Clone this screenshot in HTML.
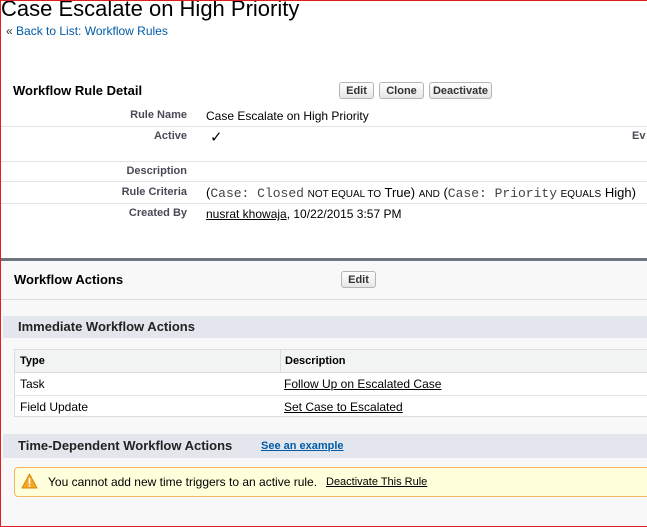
<!DOCTYPE html>
<html><head><style>
body{margin:0;width:647px;height:527px;overflow:hidden;font-family:"Liberation Sans",Arial,sans-serif;background:#fff;position:relative}
.frame{position:absolute;left:0;top:0;width:647px;height:527px;box-sizing:border-box;border:1px solid #e02020;border-right:none;pointer-events:none;z-index:9}
.a{position:absolute;white-space:nowrap}
.btn{position:absolute;height:17px;border:1px solid #b5b5b5;border-radius:3px;background:linear-gradient(#fff,#e6e6e6);font-size:11px;font-weight:bold;color:#333;text-align:center;line-height:17px;box-sizing:border-box}
.lbl{position:absolute;right:460px;font-size:11px;font-weight:bold;color:#4a4a56;white-space:nowrap}
.val{position:absolute;left:206px;font-size:12px;color:#000;white-space:nowrap}
.hl{position:absolute;left:1px;right:0;height:1px;background:#e3e3e3}
.mono{font-family:"Liberation Mono",monospace;font-size:13px;color:#444}
.sm{font-size:10px}
</style></head><body>
<div class="frame"></div>
<div class="a" style="left:1px;top:-4px;font-size:22px;color:#000">Case Escalate on High Priority</div>
<div class="a" style="left:6px;top:24px;font-size:12px;color:#015ba7"><span style="color:#333">«</span> Back to List: Workflow Rules</div>

<div class="a" style="left:13px;top:83px;font-size:13px;font-weight:bold;color:#000">Workflow Rule Detail</div>
<div class="btn" style="left:339px;top:82px;width:35px">Edit</div>
<div class="btn" style="left:379px;top:82px;width:45px">Clone</div>
<div class="btn" style="left:429px;top:82px;width:63px">Deactivate</div>

<div class="lbl" style="top:109px">Rule Name</div>
<div class="val" style="top:109px">Case Escalate on High Priority</div>
<div class="hl" style="top:126px"></div>
<div class="lbl" style="top:130px">Active</div>
<div class="val" style="left:210px;top:128px;font-size:15px">✓</div>
<div class="a" style="left:632px;top:130px;font-size:11px;font-weight:bold;color:#4a4a56">Ev</div>
<div class="hl" style="top:161px"></div>
<div class="lbl" style="top:165px">Description</div>
<div class="hl" style="top:181px"></div>
<div class="lbl" style="top:186px">Rule Criteria</div>
<div class="val" style="top:185px;font-size:13px">(<span class="mono">Case: Closed</span> <span class="sm">NOT EQUAL TO</span> True) <span class="sm">AND</span> (<span class="mono">Case: Priority</span> <span class="sm">EQUALS</span> High)</div>
<div class="hl" style="top:203px"></div>
<div class="lbl" style="top:207px">Created By</div>
<div class="val" style="top:207px"><u>nusrat khowaja</u>, 10/22/2015 3:57 PM</div>

<div class="a" style="left:1px;top:258px;width:646px;height:269px;background:#f8f8f8;border-top:3px solid #6f7480;box-sizing:border-box"></div>
<div class="a" style="left:14px;top:272px;font-size:13px;font-weight:bold;color:#000">Workflow Actions</div>
<div class="btn" style="left:341px;top:271px;width:35px">Edit</div>
<div class="hl" style="top:299px;background:#dcdcdc"></div>

<div class="a" style="left:3px;top:316px;width:644px;height:22px;background:#e3e6ed"></div>
<div class="a" style="left:18px;top:319px;font-size:13px;font-weight:bold;color:#222">Immediate Workflow Actions</div>

<div class="a" style="left:14px;top:349px;width:633px;height:68px;background:#fff;border:1px solid #dcdcdc;border-right:none;box-sizing:border-box"></div>
<div class="a" style="left:15px;top:350px;width:632px;height:22px;background:#f2f3f3;border-bottom:1px solid #dcdcdc"></div>
<div class="a" style="left:280px;top:350px;width:1px;height:22px;background:#dcdcdc"></div>
<div class="a" style="left:20px;top:355px;font-size:11px;font-weight:bold;color:#000">Type</div>
<div class="a" style="left:285px;top:355px;font-size:11px;font-weight:bold;color:#000">Description</div>
<div class="a" style="left:20px;top:377px;font-size:12px;color:#000">Task</div>
<div class="a" style="left:284px;top:377px;font-size:12px;color:#000;text-decoration:underline">Follow Up on Escalated Case</div>
<div class="a" style="left:15px;top:395px;width:632px;height:1px;background:#e3e3e3"></div>
<div class="a" style="left:20px;top:400px;font-size:12px;color:#000">Field Update</div>
<div class="a" style="left:284px;top:400px;font-size:12px;color:#000;text-decoration:underline">Set Case to Escalated</div>

<div class="a" style="left:3px;top:434px;width:644px;height:24px;background:#e3e6ed"></div>
<div class="a" style="left:18px;top:438px;font-size:13px;font-weight:bold;color:#222">Time-Dependent Workflow Actions</div>
<div class="a" style="left:261px;top:440px;font-size:11px;font-weight:bold;color:#015ba7;text-decoration:underline">See an example</div>

<div class="a" style="left:14px;top:467px;width:640px;height:30px;background:#ffffdc;border:1px solid #f0b860;border-radius:4px;box-sizing:border-box"></div>
<svg class="a" style="left:21px;top:473px" width="17" height="16" viewBox="0 0 17 16"><path d="M8.5 1 L16 15 L1 15 Z" fill="#f5a623" stroke="#d98a10" stroke-linejoin="round"/><rect x="7.7" y="5" width="1.6" height="6" fill="#fff"/><rect x="7.7" y="12" width="1.6" height="1.6" fill="#fff"/></svg>
<div class="a" style="left:48px;top:475px;font-size:12px;color:#000">You cannot add new time triggers to an active rule.</div>
<div class="a" style="left:326px;top:476px;font-size:11px;color:#000;text-decoration:underline">Deactivate This Rule</div>
</body></html>
